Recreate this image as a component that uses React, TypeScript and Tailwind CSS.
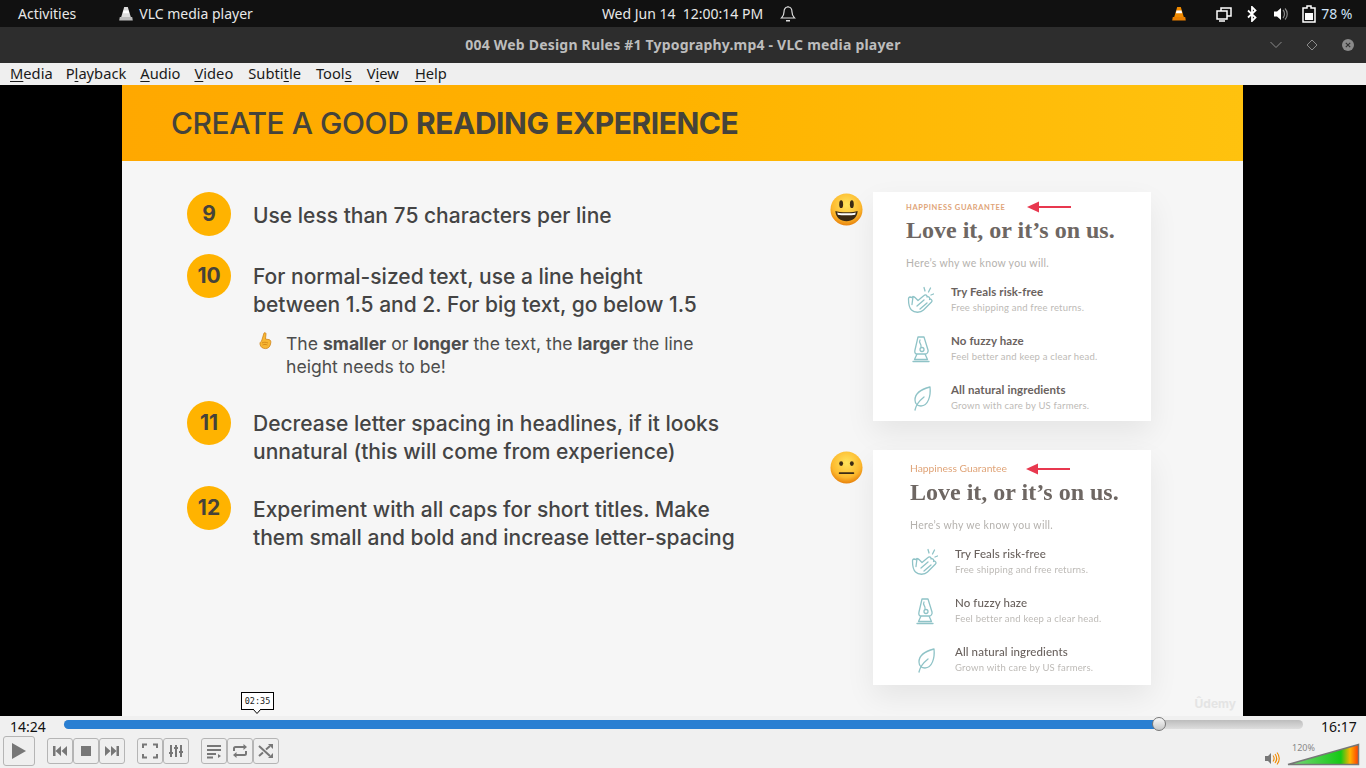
import { ReactNode } from "react";

const ubuntu = "font-['Noto_Sans','Open_Sans',sans-serif]";

const Mnemonic = ({ before = "", letter, after = "", className = "" }: { before?: string; letter: string; after?: string; className?: string }) => (
  <span className={`whitespace-pre ${className}`}>
    {before}
    <span className="underline underline-offset-2">{letter}</span>
    {after}
  </span>
);

const Cone = ({ mono = false, className = "" }: { mono?: boolean; className?: string }) => (
  <svg viewBox="0 0 14 15" className={className}>
    <path d="M5.2 1h3.6l3 10H2.2z" fill={mono ? "#ddd" : "#f08a00"} />
    <path d="M4.5 4.6h5l.7 2.6H3.8z" fill="#fff" />
    <path d="M0.8 11h12.4l.6 3.4H.2z" fill={mono ? "#bbb" : "#e87e00"} />
  </svg>
);

const Number = ({ value }: { value: string }) => (
  <div className="flex h-11 w-11 shrink-0 items-center justify-center rounded-full bg-[#ffb300] text-[21px] font-bold text-[#45423a]">{value}</div>
);

const Rule = ({ value, children, className = "", textTop = "pt-[9px]" }: { value: string; children: ReactNode; className?: string; textTop?: string }) => (
  <div className={`flex gap-[22px] ${className}`}>
    <Number value={value} />
    <p className={`text-[21px] leading-[28px] font-medium text-[#444444] ${textTop}`}>{children}</p>
  </div>
);

const Clap = () => (
  <svg viewBox="0 0 28 30" className="h-[30px] w-[28px]" fill="none" stroke="#8fc3c7" strokeWidth="1.3" strokeLinecap="round" strokeLinejoin="round">
    <path d="M4 12c-1 0-1.500 1-1.500 2 0 5 1 9 3 11 3 3 9 3 12 0l8-8c1.500-1.500-.5-3.500-2-2.500 1-1.500-1-3.500-2.500-2.500.5-1.500-1.500-3-3-1.500l-6 5-3-3c-1-1-2-1-3 0z" />
    <path d="M11 21l7-6M14 24l7-6M7 11.500l-1 8" />
    <path d="M19 6l-1-3.500M22.500 7l2-4M25 10l2.500-1" />
  </svg>
);

const Lamp = () => (
  <svg viewBox="0 0 28 30" className="h-[30px] w-[28px]" fill="none" stroke="#8fc3c7" strokeWidth="1.3" strokeLinecap="round" strokeLinejoin="round">
    <path d="M12 3h6l4 13c.5 2-1 4-2.500 4h-9C9 20 8.500 18 9 16zM11 20l-2.500 5.500h13L19 20M7 27.500h16" />
    <path d="M14 6c-2 3 2 4 1 7" />
    <circle cx="16" cy="15.500" r="2" />
  </svg>
);

const LeafIcon = () => (
  <svg viewBox="0 0 28 30" className="h-[30px] w-[28px]" fill="none" stroke="#8fc3c7" strokeWidth="1.3" strokeLinecap="round" strokeLinejoin="round">
    <path d="M24 4c-8 2-15 5-15 13 0 4 3 6 6 6 7 0 10-10 9-19zM9 27c1-5 4-9 9-13" />
  </svg>
);

const Face = ({ smile }: { smile: boolean }) => (
  <svg viewBox="0 0 34 34" className="mt-[1px] h-[33px] w-[33px] shrink-0">
    <defs>
      <radialGradient id={smile ? "faceA" : "faceB"} cx="50%" cy="35%" r="65%">
        <stop offset="0%" stopColor="#ffe45c" />
        <stop offset="70%" stopColor="#fdb92e" />
        <stop offset="100%" stopColor="#e8820c" />
      </radialGradient>
    </defs>
    <circle cx="17" cy="17" r="16.500" fill={`url(#${smile ? "faceA" : "faceB"})`} />
    {smile ? (
      <>
        <ellipse cx="11.500" cy="11.500" rx="2" ry="4" fill="#3b2a14" />
        <ellipse cx="22.500" cy="11.500" rx="2" ry="4" fill="#3b2a14" />
        <path d="M5.500 18.500c4 1.800 19 1.800 23 0-.5 7-5.500 10.500-11.500 10.500S6 25.500 5.500 18.500z" fill="#3b2a14" />
        <path d="M7.500 20c4 1.300 15 1.300 19 0l-.5 2.300c-4 1-14 1-18 0z" fill="#fff" />
      </>
    ) : (
      <>
        <ellipse cx="11.500" cy="13" rx="2" ry="2.400" fill="#3b2a14" />
        <ellipse cx="22.500" cy="13" rx="2" ry="2.400" fill="#3b2a14" />
        <rect x="9" y="22" width="16" height="1.600" rx="0.800" fill="#3b2a14" />
      </>
    )}
  </svg>
);

const rows = [
  { icon: <Clap />, title: "Try Feals risk-free", desc: "Free shipping and free returns." },
  { icon: <Lamp />, title: "No fuzzy haze", desc: "Feel better and keep a clear head." },
  { icon: <LeafIcon />, title: "All natural ingredients", desc: "Grown with care by US farmers." },
];

const Card = ({ caps }: { caps: boolean }) => (
  <div className={`w-[278px] bg-white shadow-[0_12px_28px_rgba(0,0,0,0.07)] font-['Lato',sans-serif] ${caps ? "h-[229px] pt-[10px] pl-[33px]" : "h-[235px] pt-[12px] pl-[37px]"}`}>
    <div className={`flex items-center ${caps ? "h-[12px] gap-[22px]" : "h-[14px] gap-[19px]"}`}>
      {caps ? (
        <span className="text-[7.5px] font-bold tracking-[0.62px] text-[#e0a478]">HAPPINESS GUARANTEE</span>
      ) : (
        <span className="text-[10.300px] text-[#e0a478]">Happiness Guarantee</span>
      )}
      <svg viewBox="0 0 44 12" className={`h-[12px] w-[44px] ${caps ? "-mt-[2px]" : ""}`}>
        <path d="M8 6h36" stroke="#e8384f" strokeWidth="2" />
        <path d="M0 6l12-5.500v11z" fill="#e8384f" />
      </svg>
    </div>
    <h3 className="mt-[1px] font-['Liberation_Serif',serif] text-[24px] leading-[30px] font-bold whitespace-nowrap text-[#6e6763]">Love it, or it’s on us.</h3>
    <p className="mt-[10px] text-[10.500px] leading-[16px] tracking-[0.3px] text-[#b5b2ae]">Here’s why we know you will.</p>
    <div className="mt-[14px] flex flex-col gap-[19px]">
      {rows.map((row) => (
        <div key={row.title} className="flex h-[30px]">
          <div className="w-[45px] shrink-0">{row.icon}</div>
          <div>
            <p className={`text-[11.500px] leading-[14px] ${caps ? "font-bold" : "font-medium"} tracking-[0.1px] text-[#6a625e]`}>{row.title}</p>
            <p className="mt-[2px] text-[9.500px] leading-[14px] tracking-[0.2px] text-[#bdbab6]">{row.desc}</p>
          </div>
        </div>
      ))}
    </div>
  </div>
);

const Pointer = () => (
  <svg viewBox="0 0 16 18" className="h-[18px] w-[16px] shrink-0">
    <path d="M7 1c1-.8 2.200 0 2 1.200L8.500 7l3.500.6c1.500.4 2 1.500 1.800 3-.3 3.400-2 6-5.300 6-3 0-5-1.600-5.500-4.400-.2-1.400.4-2.400 1.500-3z" fill="#f7b733" stroke="#c97a10" strokeWidth="0.700" />
    <path d="M5 11c1.500-1 4-1 6 0M5.500 13c1.500-.8 3.500-.8 5 0" stroke="#c97a10" strokeWidth="0.700" fill="none" />
  </svg>
);

const Ctrl = ({ children, className = "" }: { children: ReactNode; className?: string }) => (
  <div className={`flex h-[26px] w-[26px] items-center justify-center rounded-[3px] border border-[#b5b5b5] bg-[#efefef] ${className}`}>{children}</div>
);

const glyph = "h-[16px] w-[16px] fill-[#777777]";
const stroke = "h-[16px] w-[16px] fill-none stroke-[#777777] stroke-2";

export default function App() {
  return (
    <div className={`flex h-[768px] w-[1366px] flex-col overflow-hidden bg-black ${ubuntu}`}>
      <div className="flex h-[27px] shrink-0 items-center bg-[#111111] text-[14px] text-[#e8e8e8]">
        <span className="ml-[18px]">Activities</span>
        <Cone mono className="ml-[43px] h-[15px] w-[14px]" />
        <span className="ml-[6px]">VLC media player</span>
        <span className="ml-[349px] whitespace-pre">Wed Jun 14  12:00:14 PM</span>
        <svg viewBox="0 0 16 18" className="ml-[17px] h-[18px] w-[16px] fill-none stroke-[#dddddd] stroke-[1.2]">
          <path d="M8 2c-3 0-4 2.500-4 5 0 3-1 4.500-2.500 6h13C13 11.500 12 10 12 7s-1-5-4-5zM8 1v1" />
          <path d="M6 15h4v1.500H6z" fill="#dddddd" stroke="none" />
        </svg>
        <Cone className="ml-[376px] h-[15px] w-[14px]" />
        <svg viewBox="0 0 16 16" className="ml-[30px] h-[16px] w-[16px] fill-none stroke-white stroke-[1.5]">
          <rect x="1" y="5" width="10" height="8" />
          <path d="M5 5V2h10v8h-4M3 15h6" />
        </svg>
        <svg viewBox="0 0 10 16" className="ml-[15px] h-[16px] w-[10px] fill-none stroke-white stroke-[1.8]">
          <path d="M1 4.500l7.500 7L5 15V1l3.500 3.500-7.500 7" />
        </svg>
        <svg viewBox="0 0 14 14" className="ml-[17px] h-[14px] w-[14px]">
          <path d="M0 4.500h3L7 1v12L3 9.500H0z" fill="#fff" />
          <path d="M9 3c2 2 2 6 0 8M11 1.500c3 3 3 8 0 11" stroke="#888" strokeWidth="1.200" fill="none" />
        </svg>
        <svg viewBox="0 0 14 18" className="ml-[14px] h-[18px] w-[14px]">
          <path d="M5 1h4v2h4v14H1V3h4z" fill="none" stroke="#fff" strokeWidth="1.500" />
          <rect x="3" y="8" width="8" height="7" fill="#fff" />
        </svg>
        <span className="ml-[5px] text-[#cfe3f7]">78 %</span>
      </div>

      <div className="relative flex h-[36px] shrink-0 items-center justify-center bg-[#2d2d2d] pb-[2px] text-[14px] font-bold tracking-[0.2px] text-[#bdbdbd]">
        004 Web Design Rules #1 Typography.mp4 - VLC media player
        <div className="absolute top-0 right-[12px] flex h-full items-center gap-[24px]">
          <svg viewBox="0 0 12 8" className="h-[8px] w-[12px] fill-none stroke-[#8a8a8a]">
            <path d="M0.500 1L6 6.500 11.500 1" />
          </svg>
          <svg viewBox="0 0 12 12" className="h-[12px] w-[12px] fill-none stroke-[#8a8a8a]">
            <path d="M6 1l5 5-5 5-5-5z" />
          </svg>
          <svg viewBox="0 0 12 12" className="h-[12px] w-[12px]">
            <circle cx="6" cy="6" r="6" fill="#8a8a8a" />
            <path d="M3.800 3.800l4.400 4.400M8.200 3.800L3.800 8.200" stroke="#333" strokeWidth="1.200" />
          </svg>
        </div>
      </div>

      <div className="flex h-[22px] shrink-0 items-center gap-[14px] bg-[#efefef] pb-[2px] pl-[10px] text-[14.700px] text-[#1a1a1a]">
        <Mnemonic letter="M" after="edia" />
        <Mnemonic before="P" letter="l" after="ayback" className="-ml-[1px]" />
        <Mnemonic letter="A" after="udio" />
        <Mnemonic letter="V" after="ideo" />
        <Mnemonic before="Subti" letter="t" after="le" className="ml-[1px]" />
        <Mnemonic before="Tool" letter="s" className="ml-[1px]" />
        <Mnemonic before="V" letter="i" after="ew" className="ml-[1px]" />
        <Mnemonic letter="H" after="elp" className="ml-[2px]" />
      </div>

      <div className="flex h-[631px] shrink-0 pl-[122px]">
        <div className="relative flex w-[1121px] flex-col bg-[#f6f6f6] font-['Inter',sans-serif] blur-[0.4px]">
          <div className="flex h-[76px] shrink-0 items-center bg-gradient-to-r from-[#ffa800] via-[#ffb300] to-[#ffc20e] pl-[49px] text-[30px] font-medium tracking-[-0.45px] text-[#45433b]">
            <span className="whitespace-pre">CREATE A GOOD <b className="font-bold">READING EXPERIENCE</b></span>
          </div>
          <div className="flex flex-1 pt-[31px]">
            <div className="w-[708px] shrink-0 pl-[65px]">
              <Rule value="9" textTop="pt-[10px]">Use less than 75 characters per line</Rule>
              <Rule value="10" className="mt-[18px]">
                For normal-sized text, use a line height
                <br />
                between 1.5 and 2. For big text, go below 1.5
              </Rule>
              <div className="mt-[13px] ml-[70px] flex gap-[13px]">
                <Pointer />
                <p className="text-[17.600px] leading-[23px] text-[#4d4d4d]">
                  The <b>smaller</b> or <b>longer</b> the text, the <b>larger</b> the line
                  <br />
                  height needs to be!
                </p>
              </div>
              <Rule value="11" className="mt-[23px]">
                Decrease letter spacing in headlines, if it looks
                <br />
                unnatural (this will come from experience)
              </Rule>
              <Rule value="12" className="mt-[20px]" textTop="pt-[10px]">
                Experiment with all caps for short titles. Make
                <br />
                them small and bold and increase letter-spacing
              </Rule>
            </div>
            <div className="flex flex-col gap-[29px]">
              <div className="flex gap-[10px]">
                <Face smile />
                <Card caps />
              </div>
              <div className="flex gap-[10px]">
                <Face smile={false} />
                <Card caps={false} />
              </div>
            </div>
          </div>
          <span className="absolute right-[7px] bottom-[3px] text-[12px] font-bold text-[#e4e4e4]">Ûdemy</span>
        </div>
      </div>

      <div className="relative flex h-[20px] shrink-0 items-start bg-[#f0f0f0] text-[14px] text-[#111111]">
        <span className="w-[64px] pl-[10px]">14:24</span>
        <div className="mt-[4px] flex h-[9px] w-[1239px] rounded-full bg-gradient-to-b from-[#bdbdbd] to-[#dedede]">
          <div className="relative h-full w-[1095px] rounded-l-full bg-[#2a7fd2]">
            <div className="absolute top-[-3px] right-[-7px] h-[14px] w-[14px] rounded-full border border-[#777777] bg-gradient-to-b from-[#f8f8f8] to-[#c8c8c8]" />
          </div>
        </div>
        <span className="ml-[18px]">16:17</span>
        <div className="absolute top-[-24px] left-[241px] flex h-[18px] w-[33px] items-center justify-center border border-black bg-white font-['DejaVu_Sans_Mono',monospace] text-[8.500px] text-[#222222]">
          02:35
          <svg viewBox="0 0 8 5" className="absolute top-[16px] left-[11px] h-[5px] w-[8px]">
            <path d="M0 0l4 4.500L8 0" fill="#fff" stroke="#000" />
          </svg>
        </div>
      </div>

      <div className="relative flex h-[32px] shrink-0 items-start bg-[#f0f0f0] pl-[3px]">
        <div className="flex h-[30px] w-[32px] items-center justify-center rounded-[3px] border border-[#b5b5b5] bg-[#efefef]">
          <svg viewBox="0 0 16 18" className="h-[18px] w-[16px] fill-[#777777]">
            <path d="M1 1l14 8-14 8z" />
          </svg>
        </div>
        <div className="mt-[2px] ml-[12px] flex">
          <Ctrl>
            <svg viewBox="0 0 16 16" className={glyph}>
              <path d="M1 3h2.500v10H1zM9 3v10L3.500 8zM15 3v10L9.500 8z" />
            </svg>
          </Ctrl>
          <Ctrl>
            <svg viewBox="0 0 16 16" className={glyph}>
              <rect x="3" y="3" width="10" height="10" />
            </svg>
          </Ctrl>
          <Ctrl>
            <svg viewBox="0 0 16 16" className={glyph}>
              <path d="M15 3h-2.500v10H15zM7 3v10l5.500-5zM1 3v10l5.500-5z" />
            </svg>
          </Ctrl>
        </div>
        <div className="mt-[2px] ml-[12px] flex">
          <Ctrl>
            <svg viewBox="0 0 16 16" className={stroke}>
              <path d="M1 5V1.500h4M11 1.500h4V5M15 11v3.500h-4M5 14.500H1V11" />
            </svg>
          </Ctrl>
          <Ctrl>
            <svg viewBox="0 0 16 16" className={stroke}>
              <path d="M3 2v12M8 2v12M13 2v12M1 10h4M6 5h4M11 9h4" />
            </svg>
          </Ctrl>
        </div>
        <div className="mt-[2px] ml-[12px] flex">
          <Ctrl>
            <svg viewBox="0 0 16 16" className={stroke}>
              <path d="M1 3h14M1 7h14M1 11h9M1 14.500h6" />
              <path d="M12 11l3 2-3 2z" className="fill-[#777777] stroke-none" />
            </svg>
          </Ctrl>
          <Ctrl>
            <svg viewBox="0 0 16 16" className={stroke}>
              <path d="M2 8V5.500c0-1 .5-1.500 1.500-1.500H13M14 8v2.500c0 1-.5 1.500-1.500 1.500H3" />
              <path d="M11.500 1l3.500 3-3.500 3zM4.500 9L1 12l3.500 3z" className="fill-[#777777] stroke-none" />
            </svg>
          </Ctrl>
          <Ctrl>
            <svg viewBox="0 0 16 16" className={stroke}>
              <path d="M1 3l11 10M1 13l4-3.500M8 6.500L12 3" />
              <path d="M15 1v5l-5-5zM15 15v-5l-5 5z" className="fill-[#777777] stroke-none" />
            </svg>
          </Ctrl>
        </div>
        <svg viewBox="0 0 15 15" className="absolute top-[15px] left-[1265px] h-[15px] w-[15px]">
          <path d="M0 5h3l3-3v11l-3-3H0z" fill="#777" />
          <path d="M8 4.500c1.500 2 1.500 4 0 6M10 3c2.300 3 2.300 6 0 9M12 1.500c3 3.500 3 8.500 0 12" stroke="#f08a00" strokeWidth="1.100" fill="none" />
        </svg>
        <svg viewBox="0 0 73 23" className="absolute top-[7px] left-[1287px] h-[23px] w-[73px]">
          <defs>
            <linearGradient id="vol" x1="0" x2="1" y1="0" y2="0">
              <stop offset="0%" stopColor="#7fd67f" />
              <stop offset="75%" stopColor="#16c916" />
              <stop offset="88%" stopColor="#ffb300" />
              <stop offset="100%" stopColor="#ff3b00" />
            </linearGradient>
          </defs>
          <path d="M1 21.500L71.500 1.500v20z" fill="url(#vol)" stroke="#777" strokeWidth="1.500" />
        </svg>
        <span className="absolute top-[5px] left-[1292px] text-[9px] text-[#888888]">120%</span>
      </div>
    </div>
  );
}
